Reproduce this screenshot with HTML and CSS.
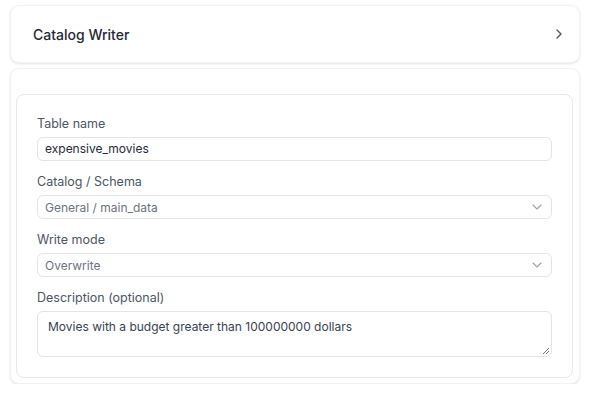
FILE: index.html
```html
<!DOCTYPE html>
<html>
<head>
<meta charset="utf-8">
<link rel="stylesheet" href="styles.css">
</head>
<body>
<div class="page">
  <div class="card header">
    <span class="title">Catalog Writer</span>
    <svg class="chev" width="12" height="12" viewBox="0 0 12 12"><path d="M4 2 L8 6 L4 10" fill="none" stroke="#4b5563" stroke-width="1.3" stroke-linecap="round" stroke-linejoin="round"/></svg>
  </div>
  <div class="card body-card">
    <div class="panel">
      <div class="field">
        <label class="label">Table name</label>
        <div class="control input">expensive_movies</div>
      </div>
      <div class="field">
        <label class="label">Catalog / Schema</label>
        <div class="control select"><span>General / main_data</span>
          <svg width="12" height="12" viewBox="0 0 12 12"><path d="M2 4 L6 8 L10 4" fill="none" stroke="#9ca3af" stroke-width="1.1" stroke-linecap="round" stroke-linejoin="round"/></svg>
        </div>
      </div>
      <div class="field">
        <label class="label">Write mode</label>
        <div class="control select"><span>Overwrite</span>
          <svg width="12" height="12" viewBox="0 0 12 12"><path d="M2 4 L6 8 L10 4" fill="none" stroke="#9ca3af" stroke-width="1.1" stroke-linecap="round" stroke-linejoin="round"/></svg>
        </div>
      </div>
      <div class="field last">
        <label class="label">Description (optional)</label>
        <div class="control textarea">Movies with a budget greater than 100000000 dollars
          <svg class="grip" width="8" height="8" viewBox="0 0 8 8"><path d="M7 1 L1 7 M7 4 L4 7" stroke="#6b7280" stroke-width="1"/></svg>
        </div>
      </div>
    </div>
  </div>
</div>
</body>
</html>
```

FILE: styles.css
```css
* { box-sizing: border-box; }
html, body { margin: 0; padding: 0; background: #ffffff; }
body { font-family: Inter, "Noto Sans", sans-serif; color: #1f2937; }
.page { padding: 5px 13px 0 10px; display: flex; flex-direction: column; gap: 5px; }
.card {
  background: #fff;
  border: 1px solid #f1f2f4;
  border-radius: 9px;
  box-shadow: 0 1px 3px rgba(0,0,0,0.08), 0 1px 2px rgba(0,0,0,0.04);
}
.header {
  height: 58px;
  display: flex;
  align-items: center;
  justify-content: space-between;
  padding: 0 14px 0 22px;
}
.title { font-size: 14px; font-weight: 500; color: #1f2937; }
.chev { display: block; }
.body-card { padding: 25px 6px 5px 5px; }
.panel {
  border: 1px solid #e5e7eb;
  border-radius: 8px;
  padding: 20px;
  display: flex;
  flex-direction: column;
  gap: 12px;
}
.field { display: flex; flex-direction: column; gap: 4px; }
.label { font-size: 12.5px; line-height: 18px; color: #4b5563; font-weight: 400; }
.control {
  border: 1px solid #e2e4e9;
  border-radius: 6px;
  font-size: 12px;
  background: #fff;
}
.input { height: 24px; line-height: 22px; padding: 0 7px; color: #1f2937; }
.select {
  height: 24px; padding: 0 8px 0 7px;
  display: flex; align-items: center; justify-content: space-between;
  color: #6b7280;
}
.select svg { display: block; }
.textarea {
  height: 46px; position: relative;
  padding: 6px 10px; line-height: 17px; color: #374151;
}
.grip { position: absolute; right: 1px; bottom: 1px; }
```
